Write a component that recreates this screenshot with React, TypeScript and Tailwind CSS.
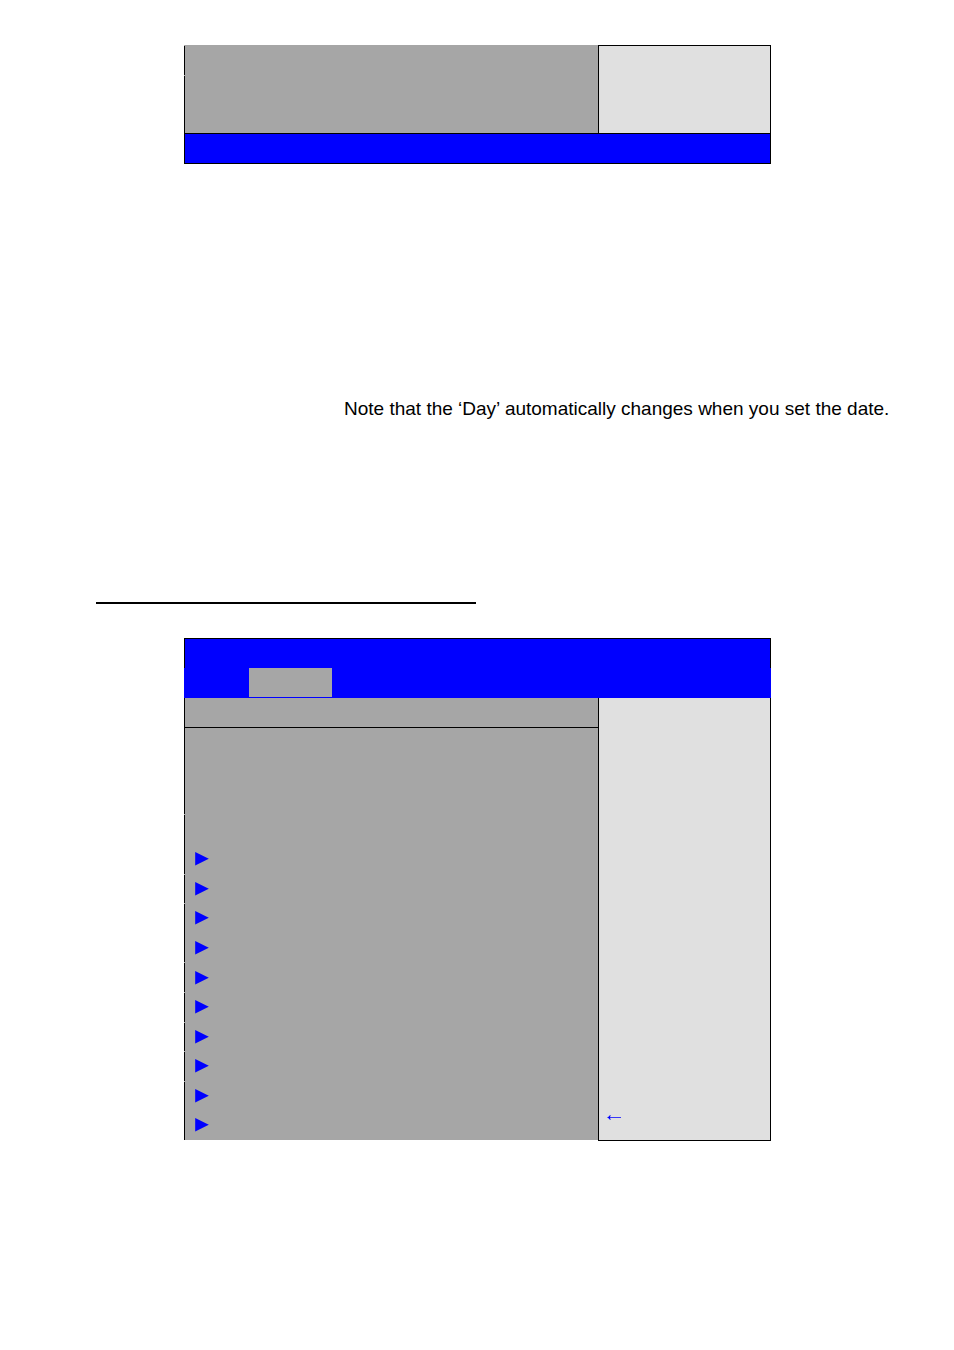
// true where the row is split from the one above it
const menuRows = [false, true, true, false, true, true, true, true, true, false];

const SubmenuArrow = () => (
  <svg className="block h-[14px] w-[14px]" viewBox="0 0 14 14" fill="#0000ff" aria-hidden="true">
    <path d="M0.2 0.1 L13.8 6.8 L0.2 13.5 Z" />
  </svg>
);

const BackArrow = () => (
  <svg className="block h-[7px] w-[14px]" viewBox="0 0 14 7" aria-hidden="true">
    <path d="M2 3.5 H14" stroke="#0000ff" strokeOpacity="0.75" />
    <path d="M0 3.5 C1.5 3 2.4 2.2 3 1 H3.6 L3 3.5 L3.6 6 H3 C2.4 4.8 1.5 4 0 3.5 Z" fill="#0000ff" />
  </svg>
);

const SetupFooter = () => {
  return (
    <section className="pl-46 pr-[183px]">
      <div className="flex h-22">
        <div className="flex flex-1 flex-col bg-[#a6a6a6] pt-px">
          <div className="h-[29px] border-l border-black" />
          <div className="mt-px flex-1 border-l border-black" />
        </div>
        <div className="w-[173px] border-x border-t border-black bg-[#e0e0e0]" />
      </div>
      <div className="h-[31px] border border-black bg-[#0000ff]" />
    </section>
  );
};

const SetupScreen = () => {
  return (
    <section className="pl-46 pr-[183px]">
      <div className="h-[30px] border-x border-t border-black bg-[#0000ff]" />

      {/* Tab bar */}
      <div className="flex h-[30px] bg-[#0000ff] pb-px pl-[65px]">
        <div className="w-[83px] bg-[#a6a6a6]" />
      </div>

      <div className="flex">
        <div className="flex-1 bg-[#a6a6a6]">
          <div className="h-[30px] border-b border-l border-black" />
          <div className="h-[86px] border-l border-black" />
          <div className="mt-px h-[29px] border-l border-black" />
          <ul className="grid h-[296px] grid-rows-10">
            {menuRows.map((split, i) => (
              <li key={i} className={split ? "flex pt-px" : "flex"}>
                <span className="flex flex-1 items-center border-l border-black pl-[10px]">
                  <SubmenuArrow />
                </span>
              </li>
            ))}
          </ul>
        </div>

        {/* Help panel */}
        <aside className="-mb-px flex w-[173px] flex-col justify-end border-x border-b border-black bg-[#e0e0e0] pb-[19px] pl-2">
          <BackArrow />
        </aside>
      </div>
    </section>
  );
};

export default function App() {
  return (
    <main className="min-h-screen bg-white pt-[45px] font-['Liberation_Sans',Arial,sans-serif] text-black">
      <SetupFooter />
      <p className="mt-[233px] pl-[344px] text-[19px] leading-6 whitespace-nowrap">
        Note that the ‘Day’ automatically changes when you set the date.
      </p>
      <hr className="mt-[181px] mb-[34px] ml-24 w-[380px] border-t-2 border-black" />
      <SetupScreen />
    </main>
  );
}
